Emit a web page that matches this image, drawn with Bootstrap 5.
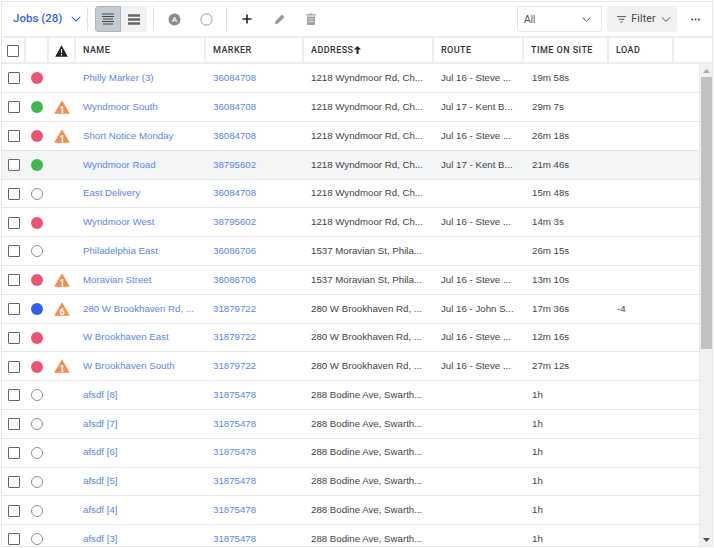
<!doctype html>
<html lang="en">
<head>
<meta charset="utf-8">
<title>Jobs</title>
<link href="https://cdn.jsdelivr.net/npm/bootstrap@5.3.0/dist/css/bootstrap.min.css" rel="stylesheet">
<style>
html,body{height:100%;overflow:hidden;background:#fff}
body{font-family:"Liberation Sans",Arial,sans-serif;font-size:9.7px;color:#444;padding:1px 1px 0 1px}
.shell{width:712px;height:546px;border:1px solid #e6e8ea;display:flex;flex-direction:column;overflow:hidden}
.bar{height:36px;flex:none;border-bottom:2px solid #eceef0}
.jobs-btn{color:#2f66f0;font-family:Roboto,sans-serif;font-size:11.5px;font-weight:500;padding:0 6px 0 11px;border:0;background:none;width:85px}
.vsep{width:1px;height:24px;background:#dfe2e5;flex:none}
.seg{display:flex;margin-left:7px;border-radius:3px;overflow:hidden;background:#f1f2f4;height:26px}
.seg span{width:26px;display:flex;align-items:center;justify-content:center}
.seg .on{background:#c5cbd3;border:1px solid #aeb5be;border-radius:3px 0 0 3px}
.sep-a{margin-left:6px}
.tool{width:40px;display:flex;justify-content:center;align-items:center;flex:none;height:26px}
.tool-c{width:22px;margin-left:1px}
.tool-p{width:24px}
.sep-b{margin-left:9px}
.pick{width:85px;height:26px;border:1px solid #e3e5e8;border-radius:2px;padding:0 10px 0 6px;font-size:10px;color:#555}
.filt{width:70px;height:26px;background:#eff1f3;border-radius:3px;margin-left:5px;padding:0 6px 0 10px;font-family:Roboto,sans-serif;font-size:10.5px;color:#444;letter-spacing:.2px}
.more{width:34px;text-align:center;margin-left:1px}
.grid{table-layout:fixed;border-collapse:collapse;margin:0}
.grid td,.grid th{padding:0;overflow:hidden;white-space:nowrap}
.head{width:710px;height:26px;flex:none}
.head th{height:25px;border-bottom:2px solid #eceef0;border-right:2px solid #eceef0;font-family:Roboto,sans-serif;font-size:9px;font-weight:500;letter-spacing:.45px;color:#333;padding:2px 0 0 7px;text-transform:uppercase}
.head th.free{border-right:0}
.head th.ctr{padding-left:0;text-align:center}
.head .sort{margin-left:-2px;vertical-align:-.5px}
.body{flex:1;display:flex;min-height:0}
.rowsbox{width:697px;flex:none;overflow:hidden}
.rows{width:697px}
.rows td{height:28.8px;border-bottom:1px solid #e4e6e9;padding-left:8px;color:#444}
.rows td:nth-child(n+8){padding-left:9px}
.rows td.ctr{padding-left:0;text-align:center}
.rows a{color:#5b86ee;text-decoration:none}
.rows tr.hov td{background:#f4f5f6}
.chk{display:inline-block;width:12px;height:12px;border:1.5px solid #666;border-radius:1px;vertical-align:middle;background:#fff}
.dot{display:inline-block;width:12px;height:12px;border-radius:50%;vertical-align:middle}
.red{background:#ec5472}.green{background:#3cbb4c}.blue{background:#2f5ff0}
.none{border:1.3px solid #8f8f8f;background:#fff}
.warn{display:block;margin:0 auto}
.sb{flex:1;background:#f1f1f1;display:flex;flex-direction:column;align-items:center;border-left:1px solid #e9e9e9}
.sb-arrow{height:13px;flex:none;display:flex;align-items:center}
.sb-thumb{width:11px;height:272px;background:#c1c1c1;flex:none}
.sb-gap{flex:1}
</style>
</head>
<body>
<div class="shell">
  <div class="bar d-flex align-items-center">
    <button class="jobs-btn d-flex align-items-center justify-content-between"><span>Jobs (28)</span>
      <svg width="10" height="6" viewBox="0 0 10 6"><path d="M.7.8 5 5 9.3.8" fill="none" stroke="#2f66f0" stroke-width="1.1"/></svg></button>
    <span class="vsep"></span>
    <div class="seg">
      <span class="on"><svg width="12" height="12" viewBox="0 0 12 12"><path d="M0 1h12M0 3.5h12M1 6h10M0 8.5h12M1 11h10" stroke="#444" stroke-width="1"/></svg></span>
      <span><svg width="12" height="11" viewBox="0 0 12 11"><path d="M0 1.5h12M0 5.5h12M0 9.5h12" stroke="#666" stroke-width="2.4"/></svg></span>
    </div>
    <span class="vsep sep-a"></span>
    <span class="tool"><svg width="13" height="13" viewBox="0 0 13 13"><circle cx="6.5" cy="6.5" r="6" fill="#8b8b8f"/><text x="6.5" y="9.4" font-size="8" font-weight="700" text-anchor="middle" fill="#eee" font-family="Roboto">A</text></svg></span>
    <span class="tool tool-c"><svg width="13" height="13" viewBox="0 0 13 13"><circle cx="6.5" cy="6.5" r="5.6" fill="none" stroke="#999" stroke-width="1"/></svg></span>
    <span class="vsep sep-b"></span>
    <span class="tool"><svg width="10" height="10" viewBox="0 0 10 10"><path d="M5 .5v9M.5 5h9" stroke="#222" stroke-width="1.6"/></svg></span>
    <span class="tool tool-p"><svg width="11" height="11" viewBox="0 0 11 11"><path d="M8 .5 10.5 3 4 9.5 1 10.2 1.5 7Z" fill="#999"/></svg></span>
    <span class="tool"><svg width="10" height="12" viewBox="0 0 10 12"><path d="M3.5 1.2V.4h3v.8H10v1.2H0V1.2ZM1 3.4h8V12H1Z" fill="#a3a3a3"/><path d="M2.5 6h5M2.5 8.5h5" stroke="#e8e8e8" stroke-width=".8"/></svg></span>
    <div class="ms-auto d-flex align-items-center">
      <div class="pick d-flex align-items-center justify-content-between"><span>All</span>
        <svg width="9" height="5" viewBox="0 0 9 5"><path d="M.5.5 4.5 4.3 8.5.5" fill="none" stroke="#555" stroke-width="1"/></svg></div>
      <div class="filt d-flex align-items-center justify-content-between">
        <svg width="9" height="7" viewBox="0 0 9 7"><path d="M0 .6h9M1.7 3.3h5.6M3.4 6h2.2" stroke="#555" stroke-width="1"/></svg>
        <span>Filter</span>
        <svg width="10" height="5" viewBox="0 0 9 5"><path d="M.5.5 4.5 4.3 8.5.5" fill="none" stroke="#555" stroke-width="1"/></svg></div>
      <div class="more"><svg width="9" height="3" viewBox="0 0 9 3"><circle cx="1.2" cy="1.5" r="1" fill="#444"/><circle cx="4.5" cy="1.5" r="1" fill="#444"/><circle cx="7.8" cy="1.5" r="1" fill="#444"/></svg></div>
    </div>
  </div>
  <table class="grid head">
    <colgroup><col style="width:23px"><col style="width:23px"><col style="width:27px"><col style="width:130px"><col style="width:98px"><col style="width:130px"><col style="width:90px"><col style="width:85px"><col style="width:65px"><col></colgroup>
    <tr>
      <th class="ctr"><span class="chk"></span></th><th></th>
      <th class="ctr"><svg class="warn" width="13" height="12" viewBox="0 0 13 12"><path d="M6.5.3 12.8 11.7H.2Z" fill="#1f1f1f"/><path d="M6.5 4v4M6.5 9v1.4" stroke="#fff" stroke-width="1.2"/></svg></th>
      <th>Name</th><th>Marker</th><th>Address <svg class="sort" width="7" height="8" viewBox="0 0 7 8"><path d="M3.5 0 7 3.6H4.5V8h-2V3.6H0Z" fill="#222"/></svg></th><th>Route</th><th>Time on site</th><th>Load</th><th class="free"></th>
    </tr>
  </table>
  <div class="body">
    <div class="rowsbox">
      <table class="grid rows" id="rows">
        <colgroup><col style="width:23px"><col style="width:23px"><col style="width:27px"><col style="width:130px"><col style="width:98px"><col style="width:130px"><col style="width:90px"><col style="width:85px"><col style="width:65px"><col></colgroup>
        <tbody>
<tr><td class="ctr"><span class="chk"></span></td><td class="ctr"><span class="dot red"></span></td><td class="ctr"></td><td><a href="#">Philly Marker (3)</a></td><td><a href="#">36084708</a></td><td>1218 Wyndmoor Rd, Ch...</td><td>Jul 16 - Steve ...</td><td>19m 58s</td><td></td><td></td></tr>
<tr><td class="ctr"><span class="chk"></span></td><td class="ctr"><span class="dot green"></span></td><td class="ctr"><svg class="warn" width="16" height="14" viewBox="0 0 16 14"><path d="M8 .3 15.8 13.7H.2Z" fill="#f58d4e"/><text x="8" y="12.6" font-size="9" font-weight="700" text-anchor="middle" fill="#fff" font-family="Roboto">1</text></svg></td><td><a href="#">Wyndmoor South</a></td><td><a href="#">36084708</a></td><td>1218 Wyndmoor Rd, Ch...</td><td>Jul 17 - Kent B...</td><td>29m 7s</td><td></td><td></td></tr>
<tr><td class="ctr"><span class="chk"></span></td><td class="ctr"><span class="dot red"></span></td><td class="ctr"><svg class="warn" width="16" height="14" viewBox="0 0 16 14"><path d="M8 .3 15.8 13.7H.2Z" fill="#f58d4e"/><text x="8" y="12.6" font-size="9" font-weight="700" text-anchor="middle" fill="#fff" font-family="Roboto">1</text></svg></td><td><a href="#">Short Notice Monday</a></td><td><a href="#">36084708</a></td><td>1218 Wyndmoor Rd, Ch...</td><td>Jul 16 - Steve ...</td><td>26m 18s</td><td></td><td></td></tr>
<tr class="hov"><td class="ctr"><span class="chk"></span></td><td class="ctr"><span class="dot green"></span></td><td class="ctr"></td><td><a href="#">Wyndmoor Road</a></td><td><a href="#">38795602</a></td><td>1218 Wyndmoor Rd, Ch...</td><td>Jul 17 - Kent B...</td><td>21m 46s</td><td></td><td></td></tr>
<tr><td class="ctr"><span class="chk"></span></td><td class="ctr"><span class="dot none"></span></td><td class="ctr"></td><td><a href="#">East Delivery</a></td><td><a href="#">36084708</a></td><td>1218 Wyndmoor Rd, Ch...</td><td></td><td>15m 48s</td><td></td><td></td></tr>
<tr><td class="ctr"><span class="chk"></span></td><td class="ctr"><span class="dot red"></span></td><td class="ctr"></td><td><a href="#">Wyndmoor West</a></td><td><a href="#">38795602</a></td><td>1218 Wyndmoor Rd, Ch...</td><td>Jul 16 - Steve ...</td><td>14m 3s</td><td></td><td></td></tr>
<tr><td class="ctr"><span class="chk"></span></td><td class="ctr"><span class="dot none"></span></td><td class="ctr"></td><td><a href="#">Philadelphia East</a></td><td><a href="#">36086706</a></td><td>1537 Moravian St, Phila...</td><td></td><td>26m 15s</td><td></td><td></td></tr>
<tr><td class="ctr"><span class="chk"></span></td><td class="ctr"><span class="dot red"></span></td><td class="ctr"><svg class="warn" width="16" height="14" viewBox="0 0 16 14"><path d="M8 .3 15.8 13.7H.2Z" fill="#f58d4e"/><text x="8" y="12.6" font-size="9" font-weight="700" text-anchor="middle" fill="#fff" font-family="Roboto">1</text></svg></td><td><a href="#">Moravian Street</a></td><td><a href="#">36086706</a></td><td>1537 Moravian St, Phila...</td><td>Jul 16 - Steve ...</td><td>13m 10s</td><td></td><td></td></tr>
<tr><td class="ctr"><span class="chk"></span></td><td class="ctr"><span class="dot blue"></span></td><td class="ctr"><svg class="warn" width="16" height="14" viewBox="0 0 16 14"><path d="M8 .3 15.8 13.7H.2Z" fill="#f58d4e"/><text x="8" y="12.6" font-size="9" font-weight="700" text-anchor="middle" fill="#fff" font-family="Roboto">6</text></svg></td><td><a href="#">280 W Brookhaven Rd, ...</a></td><td><a href="#">31879722</a></td><td>280 W Brookhaven Rd, ...</td><td>Jul 16 - John S...</td><td>17m 36s</td><td>-4</td><td></td></tr>
<tr><td class="ctr"><span class="chk"></span></td><td class="ctr"><span class="dot red"></span></td><td class="ctr"></td><td><a href="#">W Brookhaven East</a></td><td><a href="#">31879722</a></td><td>280 W Brookhaven Rd, ...</td><td>Jul 16 - Steve ...</td><td>12m 16s</td><td></td><td></td></tr>
<tr><td class="ctr"><span class="chk"></span></td><td class="ctr"><span class="dot red"></span></td><td class="ctr"><svg class="warn" width="16" height="14" viewBox="0 0 16 14"><path d="M8 .3 15.8 13.7H.2Z" fill="#f58d4e"/><text x="8" y="12.6" font-size="9" font-weight="700" text-anchor="middle" fill="#fff" font-family="Roboto">1</text></svg></td><td><a href="#">W Brookhaven South</a></td><td><a href="#">31879722</a></td><td>280 W Brookhaven Rd, ...</td><td>Jul 16 - Steve ...</td><td>27m 12s</td><td></td><td></td></tr>
<tr><td class="ctr"><span class="chk"></span></td><td class="ctr"><span class="dot none"></span></td><td class="ctr"></td><td><a href="#">afsdf [8]</a></td><td><a href="#">31875478</a></td><td>288 Bodine Ave, Swarth...</td><td></td><td>1h</td><td></td><td></td></tr>
<tr><td class="ctr"><span class="chk"></span></td><td class="ctr"><span class="dot none"></span></td><td class="ctr"></td><td><a href="#">afsdf [7]</a></td><td><a href="#">31875478</a></td><td>288 Bodine Ave, Swarth...</td><td></td><td>1h</td><td></td><td></td></tr>
<tr><td class="ctr"><span class="chk"></span></td><td class="ctr"><span class="dot none"></span></td><td class="ctr"></td><td><a href="#">afsdf [6]</a></td><td><a href="#">31875478</a></td><td>288 Bodine Ave, Swarth...</td><td></td><td>1h</td><td></td><td></td></tr>
<tr><td class="ctr"><span class="chk"></span></td><td class="ctr"><span class="dot none"></span></td><td class="ctr"></td><td><a href="#">afsdf [5]</a></td><td><a href="#">31875478</a></td><td>288 Bodine Ave, Swarth...</td><td></td><td>1h</td><td></td><td></td></tr>
<tr><td class="ctr"><span class="chk"></span></td><td class="ctr"><span class="dot none"></span></td><td class="ctr"></td><td><a href="#">afsdf [4]</a></td><td><a href="#">31875478</a></td><td>288 Bodine Ave, Swarth...</td><td></td><td>1h</td><td></td><td></td></tr>
<tr><td class="ctr"><span class="chk"></span></td><td class="ctr"><span class="dot none"></span></td><td class="ctr"></td><td><a href="#">afsdf [3]</a></td><td><a href="#">31875478</a></td><td>288 Bodine Ave, Swarth...</td><td></td><td>1h</td><td></td><td></td></tr>
        </tbody>
      </table>
    </div>
    <div class="sb">
      <div class="sb-arrow"><svg width="7" height="4" viewBox="0 0 7 4"><path d="M3.5 0 7 4H0Z" fill="#a8a8a8"/></svg></div>
      <div class="sb-thumb"></div>
      <div class="sb-gap"></div>
      <div class="sb-arrow"><svg width="7" height="4" viewBox="0 0 7 4"><path d="M0 0H7L3.5 4Z" fill="#505050"/></svg></div>
    </div>
  </div>
</div>
<script src="https://cdn.jsdelivr.net/npm/bootstrap@5.3.0/dist/js/bootstrap.bundle.min.js"></script>
</body>
</html>
